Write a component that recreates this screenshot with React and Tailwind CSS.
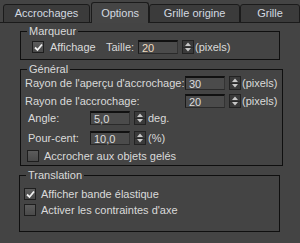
import React from 'react';

const Tab = ({ label, width, active }) => (
  <div
    className={
      active
        ? `-mb-px flex h-[21px] items-center justify-center rounded-t-[3px] border border-b-0 border-[#1b1b1b] bg-[#454545] ${width}`
        : `-mb-px flex h-[19px] items-center justify-center rounded-t-[3px] border border-[#1b1b1b] bg-[#3b3b3b] ${width}`
    }
  >
    <span className="leading-[13px] text-[#d3d9e0]">{label}</span>
  </div>
);

const Check = ({ checked }) => (
  <div className="flex h-[12px] w-[12px] shrink-0 items-center justify-center border border-[#1e1e1e] bg-gradient-to-b from-[#5c5c5c] to-[#4a4a4a]">
    {checked && (
      <svg width="9" height="9" viewBox="0 0 9 9">
        <path d="M1 4.5 L3.5 7 L8 1.5" fill="none" stroke="#f2f2f2" strokeWidth="1.8" />
      </svg>
    )}
  </div>
);

const Spinner = () => (
  <div className="flex h-[14px] w-[12px] shrink-0 flex-col border border-[#222] bg-[#3a3a3a]">
    <div className="flex flex-1 items-center justify-center border-b border-[#2a2a2a]">
      <svg width="6" height="4" viewBox="0 0 6 4">
        <path d="M0 4 L3 0.5 L6 4 Z" fill="#c8c8c8" />
      </svg>
    </div>
    <div className="flex flex-1 items-center justify-center">
      <svg width="6" height="4" viewBox="0 0 6 4">
        <path d="M0 0 L3 3.5 L6 0 Z" fill="#c8c8c8" />
      </svg>
    </div>
  </div>
);

const Field = ({ value, focused }) => (
  <div
    className={`flex h-[14px] w-[40px] shrink-0 items-center border-t-2 border-l border-b border-r border-t-[#111] border-l-[#1a1a1a] border-b-[#2a2a2a] border-r-[#333] bg-[#4b4b4b] pl-[3px] leading-[12px] ${
      focused ? 'text-[#f0dcc0]' : 'text-[#dcdcdc]'
    }`}
  >
    {value}
  </div>
);

const Group = ({ title, className, children }) => (
  <fieldset className={`border border-[#0f0f0f] ${className}`}>
    <legend className="ml-[6px] px-[2px] leading-[13px]">{title}</legend>
    {children}
  </fieldset>
);

export default function App() {
  return (
    <div className="h-[243px] w-[300px] overflow-hidden bg-[#444444] font-['Liberation_Sans',Arial,sans-serif] text-[11px] text-[#dadada]">
      <div className="flex h-[23px] items-end border-b border-[#1b1b1b] pl-[3px]">
        <Tab label="Accrochages" width="w-[93px]" />
        <div className="w-[1px]" />
        <Tab label="Options" width="w-[62px]" active />
        <Tab label="Grille origine" width="w-[97px]" />
        <Tab label="Grille" width="w-[60px] shrink-0" />
      </div>

      <Group title="Marqueur" className="ml-[20px] mt-[2px] w-[260px] pb-[5px]">
        <div className="mt-[2px] flex h-[14px] items-center pl-[11px]">
          <Check checked />
          <span className="ml-[6px] w-[56px]">Affichage</span>
          <span className="w-[32px]">Taille:</span>
          <Field value="20" focused />
          <div className="w-[4px]" />
          <Spinner />
          <span className="ml-[1px]">(pixels)</span>
        </div>
      </Group>

      <Group title="Général" className="ml-[20px] mt-[3px] w-[263px] pb-[2px]">
        <div className="flex h-[14px] items-center pl-[4px]">
          <span className="w-[160px]">Rayon de l'aperçu d'accrochage:</span>
          <Field value="30" />
          <div className="w-[4px]" />
          <Spinner />
          <span className="ml-[1px]">(pixels)</span>
        </div>
        <div className="mt-[4px] flex h-[14px] items-center pl-[4px]">
          <span className="w-[160px]">Rayon de l'accrochage:</span>
          <Field value="20" />
          <div className="w-[4px]" />
          <Spinner />
          <span className="ml-[1px]">(pixels)</span>
        </div>
        <div className="mt-[3px] flex h-[14px] items-center pl-[7px]">
          <span className="w-[62px]">Angle:</span>
          <Field value="5,0" />
          <div className="w-[4px]" />
          <Spinner />
          <span className="ml-[2px]">deg.</span>
        </div>
        <div className="mt-[6px] flex h-[14px] items-center pl-[7px]">
          <span className="w-[62px]">Pour-cent:</span>
          <Field value="10,0" />
          <div className="w-[4px]" />
          <Spinner />
          <span className="ml-[2px]">(%)</span>
        </div>
        <div className="mt-[4px] flex h-[14px] items-center pl-[6px]">
          <Check />
          <span className="ml-[5px]">Accrocher aux objets gelés</span>
        </div>
      </Group>

      <Group title="Translation" className="ml-[19px] mt-[3px] w-[261px] pb-[14px]">
        <div className="mt-[5px] flex h-[14px] items-center pl-[4px]">
          <Check checked />
          <span className="ml-[5px]">Afficher bande élastique</span>
        </div>
        <div className="mt-[2px] flex h-[14px] items-center pl-[4px]">
          <Check />
          <span className="ml-[5px]">Activer les contraintes d'axe</span>
        </div>
      </Group>
    </div>
  );
}
